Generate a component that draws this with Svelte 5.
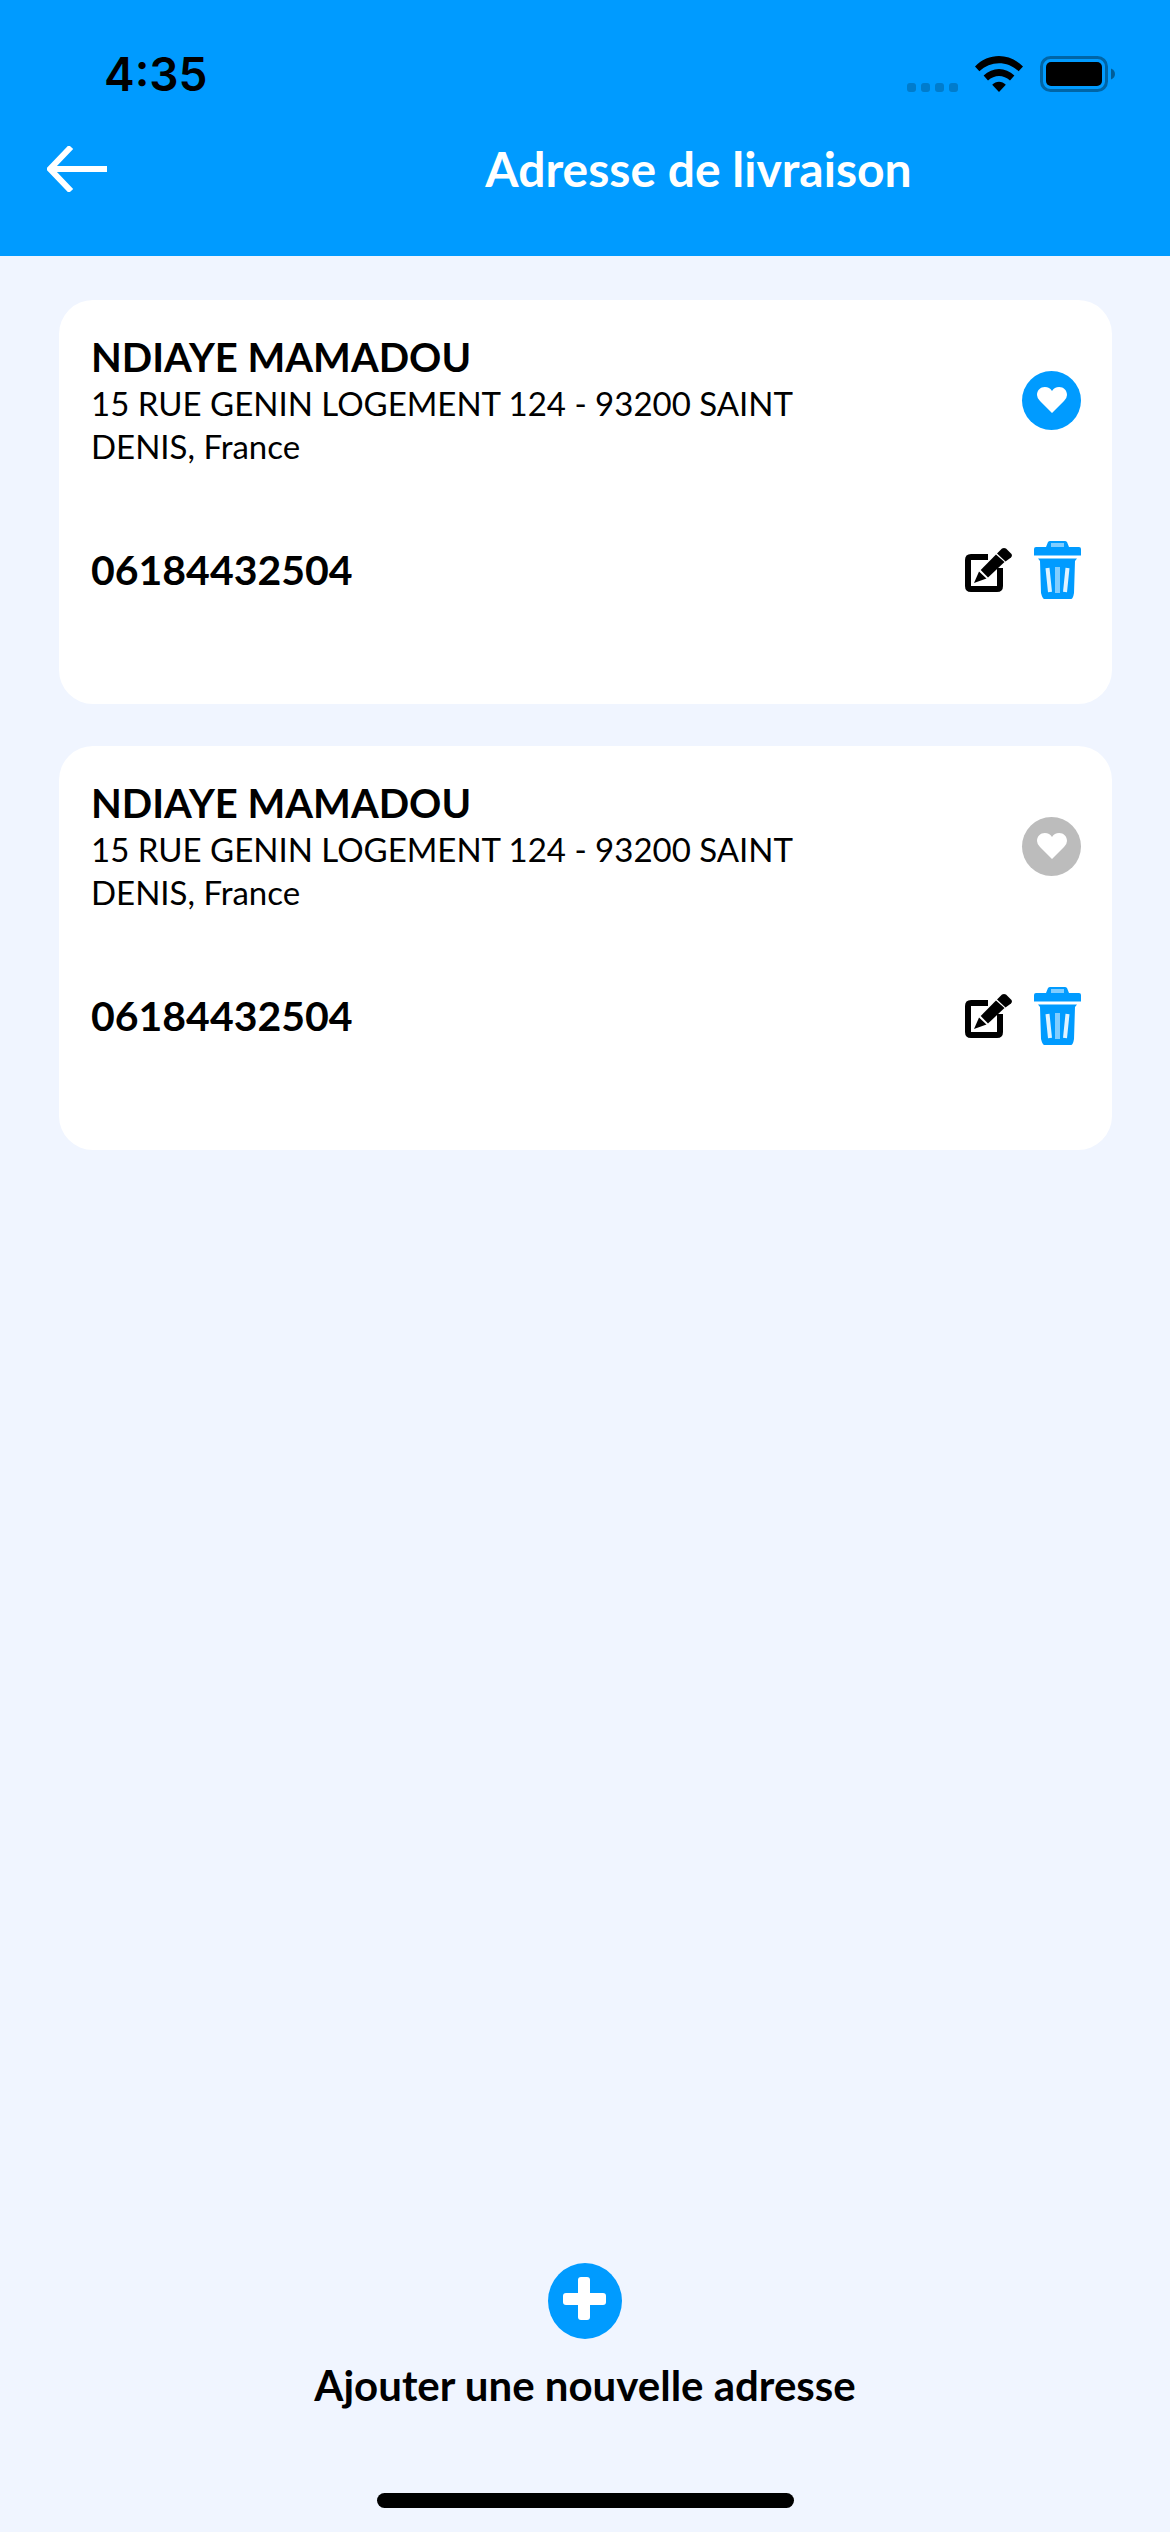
<script>
  let addresses = $state([
    {
      id: 1,
      name: 'NDIAYE MAMADOU',
      address: '15 RUE GENIN LOGEMENT 124 - 93200 SAINT DENIS, France',
      phone: '06184432504',
      favorite: true
    },
    {
      id: 2,
      name: 'NDIAYE MAMADOU',
      address: '15 RUE GENIN LOGEMENT 124 - 93200 SAINT DENIS, France',
      phone: '06184432504',
      favorite: false
    }
  ]);

  function setFavorite(id) {
    for (const entry of addresses) entry.favorite = entry.id === id;
  }

  function remove(id) {
    addresses = addresses.filter((entry) => entry.id !== id);
  }
</script>

<div class="screen">
  <header>
    <div class="status">
      <span class="time">4:35</span>
      <div class="indicators">
        <svg class="dots" width="51" height="36" viewBox="0 0 51 36" aria-hidden="true">
          <rect x="0" y="27" width="9" height="9" rx="3" />
          <rect x="14" y="27" width="9" height="9" rx="3" />
          <rect x="28" y="27" width="9" height="9" rx="3" />
          <rect x="42" y="27" width="9" height="9" rx="3" />
        </svg>
        <svg class="wifi" width="48" height="36" viewBox="0 0 48 36" aria-hidden="true">
          <path d="M0 10.500C13.500-3.400 34.500-3.400 48 10.500L43.600 15.300C32.500 4.600 15.500 4.600 4.400 15.300Z" />
          <path d="M8.600 19.600C17.500 10.700 30.500 10.700 39.400 19.600L35 24.400C28.500 18.400 19.500 18.400 13 24.400Z" />
          <path d="M17.200 28.800C21 24.600 27 24.600 30.800 28.800L24 36Z" />
        </svg>
        <svg class="battery" width="75" height="36" viewBox="0 0 75 36" aria-hidden="true">
          <rect class="shell" x="1.500" y="1.500" width="65" height="33" rx="9" />
          <rect x="6" y="6" width="56" height="24" rx="5" />
          <path class="tip" d="M71 12.500C76.300 14.500 76.300 21.500 71 23.500Z" />
        </svg>
      </div>
    </div>
    <div class="nav">
      <button class="back" aria-label="Retour">
        <svg width="60" height="46" viewBox="0 0 60 46" aria-hidden="true">
          <path d="M24 1L3 23L24 45M3 23H60" />
        </svg>
      </button>
      <h1>Adresse de livraison</h1>
    </div>
  </header>

  <main>
    {#each addresses as entry (entry.id)}
      <article>
        <div class="row">
          <div class="details">
            <h2>{entry.name}</h2>
            <p>{entry.address}</p>
          </div>
          <button
            class="favorite"
            class:active={entry.favorite}
            aria-pressed={entry.favorite}
            aria-label="Adresse favorite"
            onclick={() => setFavorite(entry.id)}
          >
            <svg width="30" height="26" viewBox="0 0 30 26" aria-hidden="true">
              <path d="M15 26L3 14Q0 11 0 8C0 3 3.500 0 7.800 0C11 0 13.500 1.500 15 4C16.500 1.500 19 0 22.200 0C26.500 0 30 3 30 8Q30 11 27 14Z" />
            </svg>
          </button>
        </div>
        <div class="row">
          <span class="phone">{entry.phone}</span>
          <div class="actions">
            <button class="edit" aria-label="Modifier">
              <svg width="48" height="44" viewBox="0 0 48 44" aria-hidden="true">
                <path class="frame" d="M23 9H6Q3 9 3 12V38Q3 41 6 41H32Q35 41 35 38V20" />
                <path d="M15.700 22L31 6.500L39.500 14L23 29.500Z" />
                <path d="M32 5.500L37 .500Q39-.500 41 .500L46.500 6Q47.500 8 46 9.500L40.500 13.500Z" />
                <path d="M14 23.500L21.500 30.500L9 35Z" />
              </svg>
            </button>
            <button class="trash" aria-label="Supprimer" onclick={() => remove(entry.id)}>
              <svg width="47" height="58" viewBox="0 0 47 58" aria-hidden="true">
                <path d="M0 8Q0 6 2 6H12L14 1Q15 0 16 0H31Q32 0 33 1L35 6H45Q47 6 47 8V14.500H0Z" />
                <rect class="handle" x="17" y="2" width="13" height="4" />
                <path d="M4 17.500H43L41 20L40 52Q39 58 37 58H10.500Q8.500 58 7 52L6 20Z" />
                <path class="slot" d="M13.500 27L16 51M33.500 27L31 51" />
                <rect class="rib" x="21" y="26" width="5" height="26" />
              </svg>
            </button>
          </div>
        </div>
      </article>
    {/each}
  </main>

  <footer>
    <button class="add">
      <svg width="74" height="76" viewBox="0 0 74 76" aria-hidden="true">
        <ellipse cx="37" cy="38" rx="37" ry="38" />
        <rect x="15" y="30" width="43" height="12" rx="3" />
        <rect x="30" y="14" width="12" height="43" rx="3" />
      </svg>
      <span>Ajouter une nouvelle adresse</span>
    </button>
    <div class="home-indicator"></div>
  </footer>
</div>

<style>
  :global(body) {
    background: #f0f5ff;
  }

  .screen {
    box-sizing: border-box;
    min-height: 100vh;
    display: flex;
    flex-direction: column;
    background: #f0f5ff;
    color: #000;
    font-family: Lato, 'Open Sans', sans-serif;
  }

  button {
    display: flex;
    align-items: center;
    justify-content: center;
    padding: 0;
    border: 0;
    background: none;
    color: inherit;
    font: inherit;
    cursor: pointer;
  }

  svg {
    display: block;
  }

  h1,
  h2,
  p {
    margin: 0;
  }

  header {
    padding: 46px 0 58px;
    background: #009bff;
  }

  .status {
    display: flex;
    align-items: center;
    justify-content: space-between;
    height: 56px;
    padding: 0 55px 0 104px;
  }

  .time {
    font-family: Inter, sans-serif;
    font-size: 46px;
    font-weight: 600;
    line-height: 56px;
  }

  .indicators {
    display: flex;
    align-items: center;
    gap: 17px;
  }

  .dots {
    fill: #007ccc;
  }

  .battery .shell {
    fill: none;
    stroke: #0065a6;
    stroke-width: 3;
  }

  .battery .tip {
    fill: #005d99;
  }

  .nav {
    display: flex;
    align-items: center;
    gap: 120px;
    padding: 38px 0 0 47px;
  }

  .back path {
    fill: none;
    stroke: #fff;
    stroke-width: 6;
  }

  h1 {
    flex: 1;
    color: #fff;
    font-size: 48px;
    font-weight: 700;
    line-height: 58px;
    text-align: center;
  }

  main {
    display: flex;
    flex-direction: column;
    gap: 42px;
    padding: 44px 58px 44px 59px;
  }

  article {
    display: flex;
    flex-direction: column;
    gap: 73px;
    padding: 32px 31px 105px 32px;
    border-radius: 34px;
    background: #fff;
  }

  .row {
    display: flex;
    align-items: center;
    justify-content: space-between;
  }

  .details {
    width: 75%;
  }

  h2,
  .phone,
  .add {
    font-size: 40px;
    font-weight: 700;
    line-height: 50px;
  }

  .phone {
    font-size: 41px;
  }

  p {
    font-size: 33px;
    line-height: 43px;
  }

  .favorite {
    width: 59px;
    height: 59px;
    border-radius: 50%;
    background: #bcbcbc;
  }

  .favorite.active {
    background: #009bff;
  }

  .favorite path {
    fill: #fff;
  }

  .actions {
    display: flex;
    align-items: center;
    gap: 21px;
  }

  .edit .frame {
    fill: none;
    stroke: #000;
    stroke-width: 6;
  }

  .trash path {
    fill: #009bff;
  }

  .trash .handle,
  .trash .rib {
    fill: #80cdff;
  }

  .trash .slot {
    stroke: #e0f3ff;
    stroke-width: 4;
  }

  footer {
    display: flex;
    flex-direction: column;
    align-items: center;
    gap: 83px;
    margin-top: auto;
    padding-bottom: 24px;
  }

  .add {
    flex-direction: column;
    gap: 21px;
    font-size: 42px;
  }

  .add ellipse {
    fill: #009bff;
  }

  .add rect {
    fill: #fff;
  }

  .home-indicator {
    width: 417px;
    height: 15px;
    border-radius: 8px;
    background: #000;
  }
</style>
